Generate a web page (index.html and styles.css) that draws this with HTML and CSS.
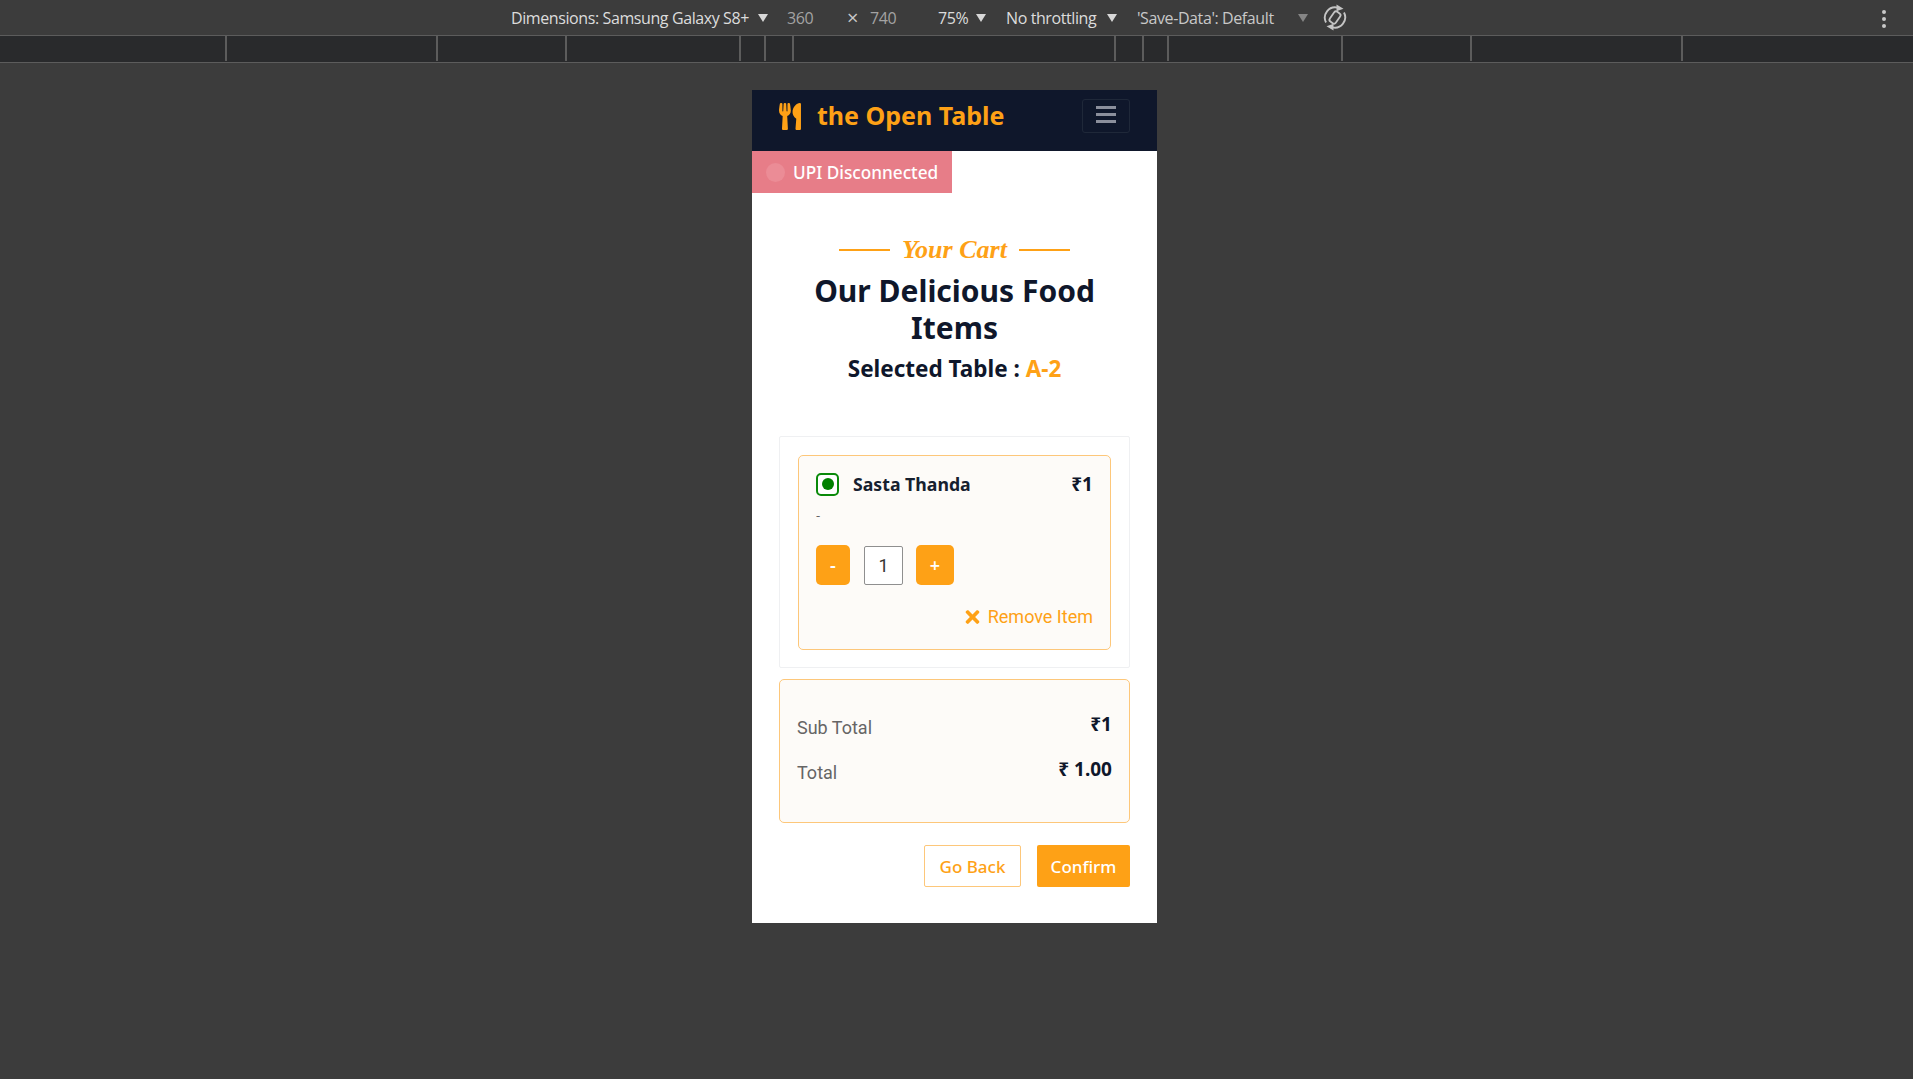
FILE: index.html
```html
<!DOCTYPE html>
<html>
<head>
<title>the Open Table</title>
<meta charset="utf-8">
<link rel="stylesheet" href="styles.css">
</head>
<body>

<div class="devbar">
	<span class="dev_item dev_dim">Dimensions: Samsung Galaxy S8+</span>
	<i class="dev_arrow"></i>
	<span class="dev_item dev_num dev_w">360</span>
	<span class="dev_item dev_x">×</span>
	<span class="dev_item dev_num dev_h">740</span>
	<span class="dev_item dev_zoom">75%</span>
	<i class="dev_arrow"></i>
	<span class="dev_item dev_net">No throttling</span>
	<i class="dev_arrow"></i>
	<span class="dev_item dev_save">'Save-Data': Default</span>
	<i class="dev_arrow dev_arrow_off"></i>
	<svg class="dev_rotate" viewBox="0 0 24 27" fill="none" stroke="#c4c4c4">
		<rect x="8.4" y="7.5" width="7.2" height="12" rx="2.2" stroke-width="1.8" transform="rotate(35 12 13.5)"/>
		<path d="M3 18.5A10.4 10.4 0 0 1 14.5 3.6" stroke-width="1.9"/>
		<path d="M21 8.5A10.4 10.4 0 0 1 9.5 23.4" stroke-width="1.9"/>
		<path d="M13.5 0.5l7 4.2-7 2.6z" fill="#c4c4c4" stroke="none"/>
		<path d="M10.5 26.5l-7-4.2 7-2.6z" fill="#c4c4c4" stroke="none"/>
	</svg>
	<span class="dev_menu"><b></b><b></b><b></b></span>
</div>

<div class="ruler">
	<span style="width:227px"></span>
	<span style="width:211px"></span>
	<span style="width:129px"></span>
	<span style="width:174px"></span>
	<span style="width:25px"></span>
	<span style="width:28px"></span>
	<span style="width:322px"></span>
	<span style="width:28px"></span>
	<span style="width:25px"></span>
	<span style="width:174px"></span>
	<span style="width:129px"></span>
	<span style="width:211px"></span>
	<span style="width:230px"></span>
</div>

<div class="stage">
	<div class="phone">

		<nav class="navbar">
			<div class="brand">
				<svg class="brand_icon" viewBox="0 0 416 512"><path fill="#fea116" d="M207.9 15.2c.8 4.7 16.1 94.5 16.1 128.8 0 52.3-27.8 89.6-68.9 104.6L168 486.7c.7 13.7-10.2 25.3-24 25.3H80c-13.7 0-24.7-11.5-24-25.3l12.9-238.1C27.7 233.6 0 196.2 0 144 0 109.6 15.3 19.9 16.1 15.2 19.3-5.1 61.4-5.4 64 16.3v141.2c1.3 3.4 15.1 3.2 16 0 1.4-25.3 7.9-139.2 8-141.8 3.3-20.8 44.7-20.8 47.9 0 .2 2.7 6.6 116.5 8 141.8.9 3.2 14.8 3.4 16 0V16.3c2.6-21.6 44.8-21.4 48-1.1zm119.2 285.7l-15 185.1c-1.2 14 9.9 26 23.9 26h56c13.3 0 24-10.7 24-24V24c0-13.2-10.7-24-24-24-82.5 0-221.4 178.5-64.9 300.9z"/></svg>
				<span class="brand_name">the Open Table</span>
			</div>
			<div class="toggler"><b></b><b></b><b></b></div>
		</nav>

		<div class="upi"><i class="upi_dot"></i>UPI Disconnected</div>

		<div class="heading">
			<div class="tagline"><i></i><span>Your Cart</span><i></i></div>
			<h1>Our Delicious Food Items</h1>
			<h2>Selected Table : <em>A-2</em></h2>
		</div>

		<div class="cart">
			<div class="item">
				<div class="item_top">
					<span class="veg"><i></i></span>
					<span class="item_name">Sasta Thanda</span>
					<span class="item_price">₹1</span>
				</div>
				<div class="item_desc">-</div>
				<div class="qty">
					<button class="qty_btn qty_minus">-</button>
					<input class="qty_input" value="1">
					<button class="qty_btn qty_plus">+</button>
				</div>
				<div class="remove">
					<svg class="remove_icon" viewBox="0 0 352 512"><path fill="#fea116" d="M242.72 256l100.07-100.07c12.28-12.28 12.28-32.19 0-44.48l-22.24-22.24c-12.28-12.28-32.19-12.28-44.48 0L176 189.28 75.93 89.21c-12.28-12.28-32.19-12.28-44.48 0L9.21 111.45c-12.28 12.28-12.28 32.19 0 44.48L109.28 256 9.21 356.07c-12.28 12.28-12.28 32.19 0 44.48l22.24 22.24c12.28 12.28 32.2 12.28 44.48 0L176 322.72l100.07 100.07c12.28 12.28 32.2 12.28 44.48 0l22.24-22.24c12.28-12.28 12.28-32.19 0-44.48L242.72 256z"/></svg>
					<span>Remove Item</span>
				</div>
			</div>
		</div>

		<div class="totals">
			<div class="total_row"><span>Sub Total</span><strong>₹1</strong></div>
			<div class="total_row"><span>Total</span><strong>₹ 1.00</strong></div>
		</div>

		<div class="actions">
			<button class="btn btn_back">Go Back</button>
			<button class="btn btn_confirm">Confirm</button>
		</div>

	</div>
</div>

</body>
</html>
```

FILE: styles.css
```css
html {
	background: #3c3c3c;
}
body {
	margin: 0;
	height: 1079px;
	overflow: hidden;
	background: #3c3c3c;
	font-family: "Noto Sans", sans-serif;
	color: #0f172b;
}

/* device toolbar */
.devbar {
	display: flex;
	align-items: center;
	height: 35px;
	padding-left: 511px;
	font-family: "Open Sans", sans-serif;
	font-size: 16px;
	color: #dcdcdc;
	position: relative;
}
.dev_item {
	white-space: nowrap;
	letter-spacing: -0.4px;
}
.dev_dim {
	width: 240px;
}
.dev_num {
	color: #a3a3a3;
}
.dev_w {
	width: 26px;
	margin-left: 19px;
}
.dev_x {
	width: 12px;
	margin-left: 34px;
	font-size: 20px;
	color: #c8c8c8;
}
.dev_h {
	width: 26px;
	margin-left: 11px;
}
.dev_zoom {
	width: 31px;
	margin-left: 42px;
}
.dev_net {
	width: 94px;
	margin-left: 20px;
}
.dev_save {
	width: 141px;
	margin-left: 20px;
	color: #c8c8c8;
}
.dev_arrow {
	width: 0;
	height: 0;
	margin-left: 7px;
	border-left: 5px solid transparent;
	border-right: 5px solid transparent;
	border-top: 8px solid #d8d8d8;
}
.dev_arrow_off {
	margin-left: 20px;
	border-top-color: #858585;
}
.dev_rotate {
	width: 24px;
	height: 27px;
	margin-left: 15px;
}
.dev_menu {
	position: absolute;
	left: 1882px;
	top: 10px;
	display: flex;
	flex-direction: column;
	gap: 3px;
}
.dev_menu b {
	width: 4px;
	height: 4px;
	border-radius: 50%;
	background: #c8c8c8;
}

.ruler {
	display: flex;
	height: 26px;
	background: #292a2c;
	border-top: 1px solid #5c5c5c;
	border-bottom: 1px solid #5c5c5c;
}
.ruler span {
	box-sizing: border-box;
	height: 25px;
	border-right: 2px solid #5c5c5c;
}
.ruler span:last-child {
	border-right: 0;
}

/* page inside device frame */
.stage {
	padding: 27px 0 0 752px;
}
.phone {
	width: 405px;
	height: 833px;
	background: #fff;
	box-sizing: border-box;
	padding-bottom: 36px;
}
.navbar {
	display: flex;
	align-items: center;
	justify-content: space-between;
	height: 61px;
	padding: 0 27px 9px 27px;
	background: #0f172b;
	box-sizing: border-box;
}
.brand {
	display: flex;
	align-items: center;
	gap: 16px;
}
.brand_icon {
	width: 22px;
	height: 27px;
}
.brand_name {
	padding-bottom: 3px;
	font-family: "Noto Sans", sans-serif;
	font-size: 25px;
	line-height: 30px;
	font-weight: 700;
	color: #fea116;
}
.toggler {
	display: flex;
	flex-direction: column;
	gap: 4px;
	box-sizing: border-box;
	width: 48px;
	height: 34px;
	padding: 6px 13px;
	border: 1px solid #1f2839;
	border-radius: 3px;
}
.toggler b {
	height: 3px;
	background: #8b8f9c;
}
.upi {
	display: flex;
	align-items: center;
	width: 200px;
	height: 42px;
	padding-left: 14px;
	box-sizing: border-box;
	background: #e77d88;
	color: #fff;
	font-size: 17.2px;
	font-weight: 500;
}
.upi_dot {
	width: 19px;
	height: 19px;
	margin-right: 8px;
	border-radius: 50%;
	background: #eb8c96;
}
.heading {
	padding-top: 41px;
	text-align: center;
}
.tagline {
	display: flex;
	align-items: center;
	justify-content: center;
	gap: 12px;
	height: 32px;
	font-family: "Liberation Serif", serif;
	font-size: 26px;
	font-weight: 700;
	font-style: italic;
	color: #fea116;
}
.tagline i {
	width: 51px;
	height: 2px;
	background: #fea116;
}
h1 {
	margin: 0 auto;
	width: 300px;
	padding-top: 6px;
	font-size: 30px;
	line-height: 37px;
	font-weight: 700;
}
h2 {
	margin: 0;
	padding-top: 9px;
	font-size: 22.5px;
	line-height: 28px;
	font-weight: 700;
}
h2 em {
	font-style: normal;
	color: #fea116;
}
.cart {
	margin: 53px 27px 0;
	padding: 18px 18px;
	height: 232px;
	box-sizing: border-box;
	border: 1px solid #eff0f2;
	border-radius: 2px;
}
.item {
	height: 195px;
	box-sizing: border-box;
	padding: 16px 17px 0;
	background: #fdfbf8;
	border: 1px solid #fdc77a;
	border-radius: 5px;
}
.item_top {
	display: flex;
	align-items: center;
	height: 24px;
}
.veg {
	display: flex;
	align-items: center;
	justify-content: center;
	width: 23px;
	height: 23px;
	box-sizing: border-box;
	border: 2px solid #0a8a0a;
	border-radius: 5px;
	background: #fff;
}
.veg i {
	width: 12px;
	height: 12px;
	border-radius: 50%;
	background: #008000;
}
.item_name {
	flex: 1;
	margin-left: 14px;
	font-size: 17.7px;
	font-weight: 700;
	color: #16202f;
}
.item_price {
	font-size: 19px;
	font-weight: 700;
}
.item_desc {
	height: 20px;
	margin-top: 9px;
	font-size: 13px;
	line-height: 20px;
	color: #666565;
}
.qty {
	display: flex;
	align-items: center;
	gap: 14px;
	margin-top: 20px;
}
.qty_btn {
	height: 40px;
	padding: 0;
	border: 0;
	border-radius: 5px;
	background: #fea116;
	color: #fff;
	font-family: "Noto Sans", sans-serif;
	font-size: 18px;
	font-weight: 600;
}
.qty_minus {
	width: 34px;
}
.qty_plus {
	width: 38px;
	margin-left: -1px;
}
.qty_input {
	width: 39px;
	height: 39px;
	padding: 0;
	box-sizing: border-box;
	border: 1px solid #8f8f8f;
	border-radius: 2px;
	text-align: center;
	font-family: "Roboto", sans-serif;
	font-size: 18px;
	color: #333;
	background: #fff;
}
.remove {
	display: flex;
	align-items: center;
	justify-content: flex-end;
	gap: 8px;
	margin-top: 21px;
	font-family: "Roboto", sans-serif;
	font-size: 18px;
	color: #fea116;
}
.remove_icon {
	width: 15px;
	height: 20px;
}
.totals {
	display: flex;
	flex-direction: column;
	gap: 20px;
	height: 144px;
	margin: 11px 27px 0;
	padding: 34px 17px 0;
	box-sizing: border-box;
	background: #fdfbf8;
	border: 1px solid #fdc77a;
	border-radius: 5px;
	font-family: "Roboto", sans-serif;
	font-size: 18px;
	color: #666565;
}
.total_row {
	display: flex;
	justify-content: space-between;
	height: 25px;
	line-height: 27px;
}
.total_row strong {
	font-family: "Noto Sans", sans-serif;
	font-size: 19px;
	line-height: 21px;
	font-weight: 700;
	color: #0f172b;
}
.actions {
	display: flex;
	justify-content: flex-end;
	gap: 16px;
	margin: 22px 27px 0;
}
.btn {
	height: 42px;
	padding: 0;
	box-sizing: border-box;
	border-radius: 2px;
	font-family: "Noto Sans", sans-serif;
	font-size: 17px;
	font-weight: 500;
}
.btn_back {
	width: 97px;
	background: #fff;
	border: 1px solid #fdc77a;
	color: #fea116;
}
.btn_confirm {
	width: 93px;
	background: #fea116;
	border: 0;
	color: #fff;
}
```
